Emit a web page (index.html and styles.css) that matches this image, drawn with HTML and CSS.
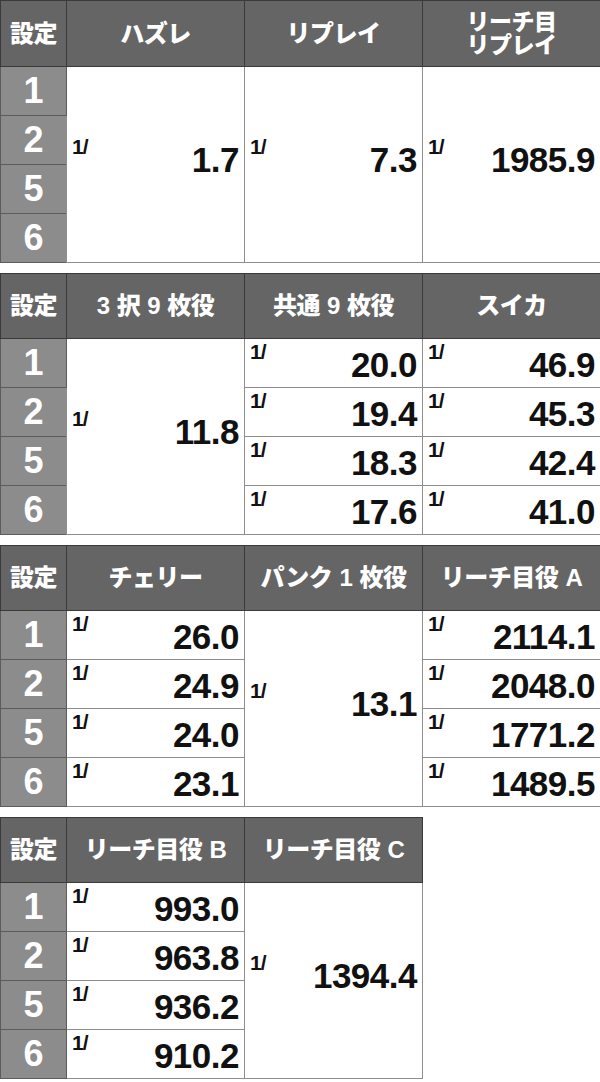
FILE: index.html
```html
<!DOCTYPE html>
<html lang="ja">
<head>
<meta charset="utf-8">
<title>小役確率</title>
<link rel="stylesheet" href="styles.css">
</head>
<body>
<div class="page">
  <table class="prob">
    <colgroup><col class="c-set"><col class="c-val"><col class="c-val"><col class="c-val"></colgroup>
    <thead>
      <tr><th>設定</th><th>ハズレ</th><th>リプレイ</th><th class="two"><span class="ln">リーチ目</span><span class="ln">リプレイ</span></th></tr>
    </thead>
    <tbody>
      <tr><td class="set">1</td>
        <td class="merged" rowspan="4"><div class="v"><span class="f">1/</span><span class="n">1.7</span></div></td>
        <td class="merged" rowspan="4"><div class="v"><span class="f">1/</span><span class="n">7.3</span></div></td>
        <td class="merged" rowspan="4"><div class="v"><span class="f">1/</span><span class="n">1985.9</span></div></td></tr>
      <tr><td class="set">2</td></tr>
      <tr><td class="set">5</td></tr>
      <tr><td class="set">6</td></tr>
    </tbody>
  </table>

  <table class="prob">
    <colgroup><col class="c-set"><col class="c-val"><col class="c-val"><col class="c-val"></colgroup>
    <thead>
      <tr><th>設定</th><th>3 択 9 枚役</th><th>共通 9 枚役</th><th>スイカ</th></tr>
    </thead>
    <tbody>
      <tr><td class="set">1</td>
        <td class="merged" rowspan="4"><div class="v"><span class="f">1/</span><span class="n">11.8</span></div></td>
        <td><div class="v"><span class="f">1/</span><span class="n">20.0</span></div></td>
        <td><div class="v"><span class="f">1/</span><span class="n">46.9</span></div></td></tr>
      <tr><td class="set">2</td>
        <td><div class="v"><span class="f">1/</span><span class="n">19.4</span></div></td>
        <td><div class="v"><span class="f">1/</span><span class="n">45.3</span></div></td></tr>
      <tr><td class="set">5</td>
        <td><div class="v"><span class="f">1/</span><span class="n">18.3</span></div></td>
        <td><div class="v"><span class="f">1/</span><span class="n">42.4</span></div></td></tr>
      <tr><td class="set">6</td>
        <td><div class="v"><span class="f">1/</span><span class="n">17.6</span></div></td>
        <td><div class="v"><span class="f">1/</span><span class="n">41.0</span></div></td></tr>
    </tbody>
  </table>

  <table class="prob">
    <colgroup><col class="c-set"><col class="c-val"><col class="c-val"><col class="c-val"></colgroup>
    <thead>
      <tr><th>設定</th><th>チェリー</th><th>パンク 1 枚役</th><th>リーチ目役 A</th></tr>
    </thead>
    <tbody>
      <tr><td class="set">1</td>
        <td><div class="v"><span class="f">1/</span><span class="n">26.0</span></div></td>
        <td class="merged" rowspan="4"><div class="v"><span class="f">1/</span><span class="n">13.1</span></div></td>
        <td><div class="v"><span class="f">1/</span><span class="n">2114.1</span></div></td></tr>
      <tr><td class="set">2</td>
        <td><div class="v"><span class="f">1/</span><span class="n">24.9</span></div></td>
        <td><div class="v"><span class="f">1/</span><span class="n">2048.0</span></div></td></tr>
      <tr><td class="set">5</td>
        <td><div class="v"><span class="f">1/</span><span class="n">24.0</span></div></td>
        <td><div class="v"><span class="f">1/</span><span class="n">1771.2</span></div></td></tr>
      <tr><td class="set">6</td>
        <td><div class="v"><span class="f">1/</span><span class="n">23.1</span></div></td>
        <td><div class="v"><span class="f">1/</span><span class="n">1489.5</span></div></td></tr>
    </tbody>
  </table>

  <table class="prob narrow">
    <colgroup><col class="c-set"><col class="c-val"><col class="c-val"></colgroup>
    <thead>
      <tr><th>設定</th><th>リーチ目役 B</th><th>リーチ目役 C</th></tr>
    </thead>
    <tbody>
      <tr><td class="set">1</td>
        <td><div class="v"><span class="f">1/</span><span class="n">993.0</span></div></td>
        <td class="merged" rowspan="4"><div class="v"><span class="f">1/</span><span class="n">1394.4</span></div></td></tr>
      <tr><td class="set">2</td>
        <td><div class="v"><span class="f">1/</span><span class="n">963.8</span></div></td></tr>
      <tr><td class="set">5</td>
        <td><div class="v"><span class="f">1/</span><span class="n">936.2</span></div></td></tr>
      <tr><td class="set">6</td>
        <td><div class="v"><span class="f">1/</span><span class="n">910.2</span></div></td></tr>
    </tbody>
  </table>
</div>
</body>
</html>
```

FILE: styles.css
```css
html, body {
  margin: 0;
  padding: 0;
  background: #ffffff;
}

.page {
  display: flex;
  flex-direction: column;
  gap: 10px;
  font-family: "Liberation Sans", "Noto Sans CJK JP", sans-serif;
}

.prob {
  border-collapse: collapse;
  table-layout: fixed;
  width: 600px;
}

.prob.narrow {
  width: 422px;
}

.c-set { width: 66px; }
.c-val { width: 178px; }

.prob th {
  height: 64px;
  padding: 0;
  background: #656565;
  color: #ffffff;
  font-weight: 900;
  font-size: 24px;
  line-height: 24px;
  letter-spacing: -0.5px;
  word-spacing: 1px;
  text-align: center;
  vertical-align: middle;
  border: 1px solid #3a3a3a;
  white-space: nowrap;
}

.prob th.two {
  font-size: 23px;
  padding-top: 1px;
}

.ln {
  display: block;
  line-height: 23px;
}

.prob td {
  height: 42px;
  padding: 5px 5px 1px 5px;
  border: 1px solid #8e8e8e;
  vertical-align: middle;
  background: #ffffff;
  color: #111111;
}

.prob td.set {
  height: 48px;
  padding: 0;
  background: #8c8c8c;
  border-color: #5c5c5c;
  color: #ffffff;
  font-weight: 700;
  font-size: 36px;
  line-height: 36px;
  text-align: center;
}

.prob td.merged {
  padding: 0 5px 10px 5px;
}

.v {
  display: flex;
  justify-content: space-between;
  align-items: flex-start;
}

.f {
  font-weight: 700;
  font-size: 21px;
  line-height: 21px;
  margin-top: -7px;
  letter-spacing: -1px;
}

.n {
  font-weight: 700;
  font-size: 35px;
  line-height: 34px;
  letter-spacing: -0.5px;
}
```
